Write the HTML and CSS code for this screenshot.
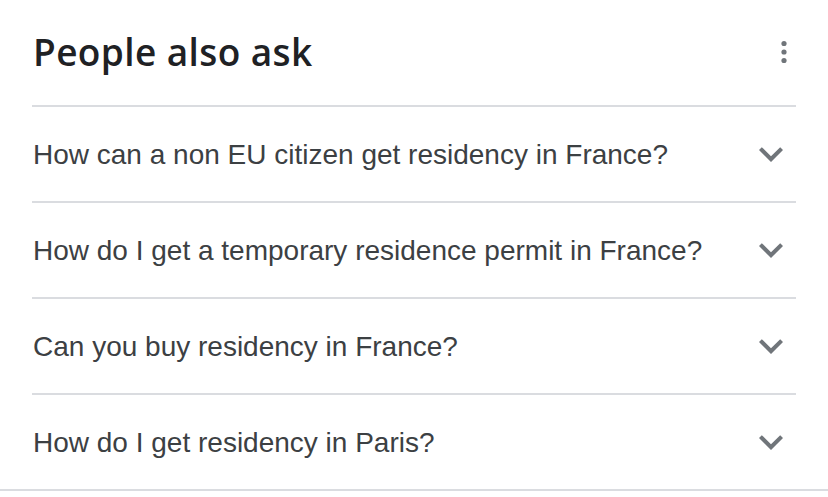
FILE: index.html
```html
<!DOCTYPE html>
<html>
<head>
<meta charset="utf-8">
<link rel="stylesheet" href="styles.css">
</head>
<body>
<div class="paa">
  <div class="header">
    <h2 class="title">People also ask</h2>
    <svg class="more" width="12" height="30" viewBox="0 0 12 30"><circle cx="6" cy="6.5" r="2.6"/><circle cx="6" cy="15" r="2.6"/><circle cx="6" cy="23.5" r="2.6"/></svg>
  </div>
  <div class="row"><span class="q">How can a non EU citizen get residency in France?</span><svg class="chev" viewBox="0 0 24 24"><path d="M16.59 8.59L12 13.17 7.41 8.59 6 10l6 6 6-6z"/></svg></div>
  <div class="row"><span class="q">How do I get a temporary residence permit in France?</span><svg class="chev" viewBox="0 0 24 24"><path d="M16.59 8.59L12 13.17 7.41 8.59 6 10l6 6 6-6z"/></svg></div>
  <div class="row"><span class="q">Can you buy residency in France?</span><svg class="chev" viewBox="0 0 24 24"><path d="M16.59 8.59L12 13.17 7.41 8.59 6 10l6 6 6-6z"/></svg></div>
  <div class="row"><span class="q">How do I get residency in Paris?</span><svg class="chev" viewBox="0 0 24 24"><path d="M16.59 8.59L12 13.17 7.41 8.59 6 10l6 6 6-6z"/></svg></div>
</div>
<div class="bottom-rule"></div>
</body>
</html>
```

FILE: styles.css
```css
html, body {
  margin: 0;
  padding: 0;
  background: #fff;
}
.paa {
  margin: 0 32px;
}
.header {
  height: 105px;
  display: flex;
  align-items: center;
  justify-content: space-between;
  box-sizing: border-box;
  padding-bottom: 2px;
}
.title {
  margin: 0;
  font-family: "Open Sans", "Roboto", sans-serif;
  font-weight: 600;
  font-size: 37px;
  color: #202124;
  letter-spacing: 0.4px;
  padding-left: 1px;
}
.more {
  fill: #70757a;
  margin-right: 6px;
}
.row {
  height: 94px;
  border-top: 2px solid #dadce0;
  display: flex;
  align-items: center;
  justify-content: space-between;
}
.q {
  font-family: "Liberation Sans", Arial, sans-serif;
  font-size: 28px;
  color: #3c4043;
  padding-left: 1px;
  padding-top: 2px;
}
.chev {
  width: 48px;
  height: 48px;
  fill: #70757a;
  margin-right: 1px;
}
.bottom-rule {
  height: 2px;
  background: #dadce0;
}
```
